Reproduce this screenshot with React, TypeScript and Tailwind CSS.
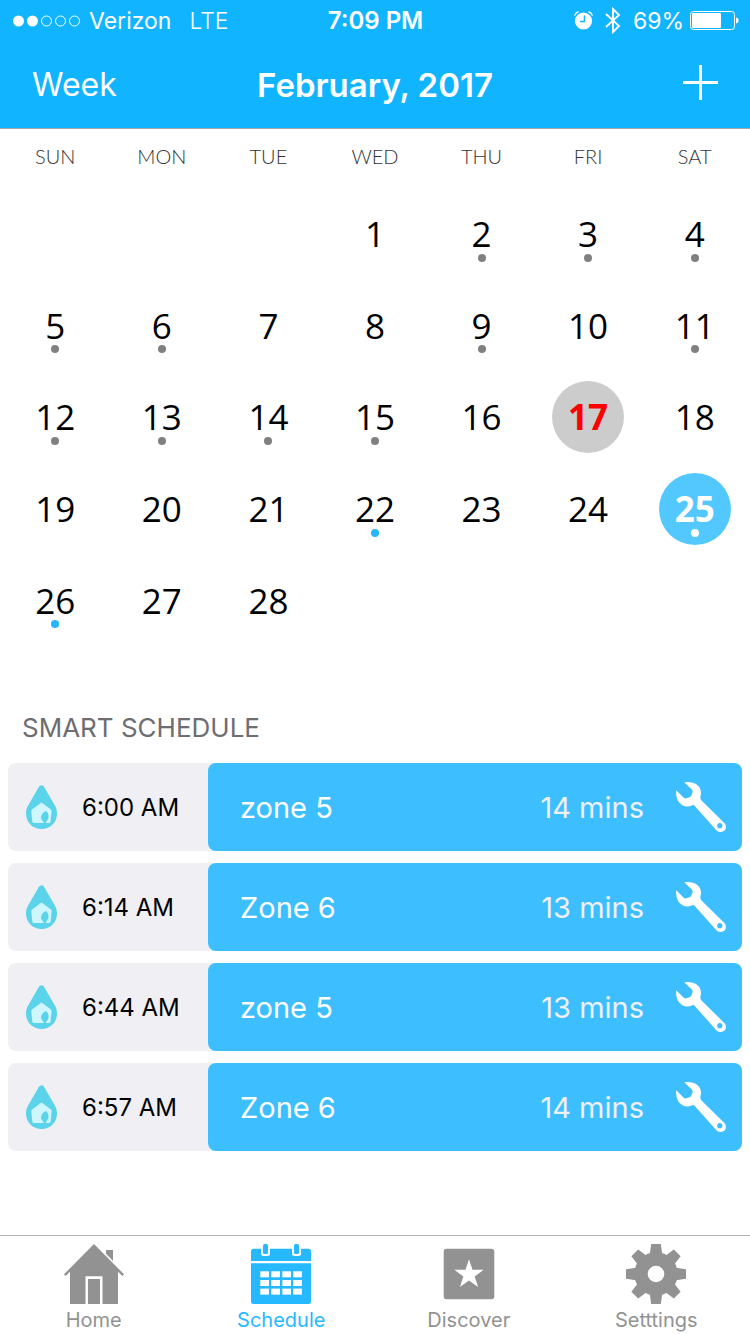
import type { ReactNode } from 'react';

type Dot = 'past' | 'upcoming';

type Zone = { time: string; name: string; duration: string };

const WEEKDAYS = ['SUN', 'MON', 'TUE', 'WED', 'THU', 'FRI', 'SAT'];

const WEEKS: (number | null)[][] = [
  [null, null, null, 1, 2, 3, 4],
  [5, 6, 7, 8, 9, 10, 11],
  [12, 13, 14, 15, 16, 17, 18],
  [19, 20, 21, 22, 23, 24, 25],
  [26, 27, 28, null, null, null, null],
];

const DOTS: Record<number, Dot> = {
  2: 'past',
  3: 'past',
  4: 'past',
  5: 'past',
  6: 'past',
  9: 'past',
  11: 'past',
  12: 'past',
  13: 'past',
  14: 'past',
  15: 'past',
  22: 'upcoming',
  25: 'upcoming',
  26: 'upcoming',
};

const TODAY = 17;
const SELECTED = 25;

const ZONES: Zone[] = [
  { time: '6:00 AM', name: 'zone 5', duration: '14 mins' },
  { time: '6:14 AM', name: 'Zone 6', duration: '13 mins' },
  { time: '6:44 AM', name: 'zone 5', duration: '13 mins' },
  { time: '6:57 AM', name: 'Zone 6', duration: '14 mins' },
];

function StatusBar() {
  return (
    <div className="grid h-[41px] grid-cols-[1fr_auto_1fr] items-center pr-[11px] pl-3 text-[23px] leading-10">
      <div className="flex items-center">
        <svg className="h-3 w-[70px]" viewBox="0 0 70 12" fill="none" stroke="currentColor">
          <circle cx="6.5" cy="6" r="5.5" fill="currentColor" stroke="none" />
          <circle cx="20.5" cy="6" r="5.5" fill="currentColor" stroke="none" />
          <circle cx="34.5" cy="6" r="5" />
          <circle cx="48.5" cy="6" r="5" />
          <circle cx="62.5" cy="6" r="5" />
        </svg>
        <span className="ml-[7px]">Verizon</span>
        <span className="ml-[18px] font-light">LTE</span>
      </div>
      <span className="text-2xl leading-10 font-semibold">7:09 PM</span>
      <div className="flex items-center justify-end">
        <svg className="h-[19px] w-[19px]" viewBox="0 0 19 19" fill="none">
          <circle cx="9.5" cy="10" r="8.6" fill="currentColor" />
          <path d="M10.5 4.5V10.5H6" stroke="#10b4ff" strokeWidth="1.5" />
          <path d="M.6 4.6C1.3 2.6 2.6 1.3 4.6.7M18.4 4.6C17.7 2.6 16.4 1.3 14.4.7" stroke="currentColor" strokeWidth="1.4" />
        </svg>
        <svg className="ml-3 h-[27px] w-4" viewBox="0 0 16 27" fill="none" stroke="currentColor" strokeWidth="1.9">
          <path d="M1 7L14 19L8 25V2L14 8L1 20" />
        </svg>
        <span className="ml-3">69%</span>
        <svg className="ml-1.5 h-[19px] w-[49px]" viewBox="0 0 49 19" fill="none">
          <rect x=".5" y=".5" width="44" height="18" rx="3" stroke="currentColor" />
          <rect x="2" y="2" width="29" height="15" rx="1" fill="currentColor" />
          <path d="M46 6.500c1.800.4 2.600 1.400 2.600 3s-.8 2.600-2.600 3z" fill="currentColor" />
        </svg>
      </div>
    </div>
  );
}

function Header() {
  return (
    <header className="border-b border-[#a3a9ad] bg-[#10b4ff] text-white">
      <StatusBar />
      <div className="grid h-[87px] grid-cols-[1fr_auto_1fr] items-center px-8">
        <button type="button" className="justify-self-start text-[32px] leading-10">
          Week
        </button>
        <h1 className="text-[33px] leading-10 font-semibold">February, 2017</h1>
        <button type="button" aria-label="Add schedule" className="mb-1 justify-self-end">
          <svg className="h-[35px] w-[35px]" viewBox="0 0 35 35" stroke="currentColor" strokeWidth="3">
            <path d="M17.500 0V35M0 17.500H35" />
          </svg>
        </button>
      </div>
    </header>
  );
}

function Day({ day }: { day: number }) {
  const dot = DOTS[day];
  let tone = 'text-black';
  let dotTone = dot === 'past' ? 'bg-[#808080]' : 'bg-[#27b5fb]';
  if (day === TODAY) tone = 'bg-[#cccccc] font-bold text-[#ff0000]';
  if (day === SELECTED) {
    tone = 'bg-[#53c8ff] font-bold text-white';
    dotTone = 'bg-white';
  }

  return (
    <button
      type="button"
      className={`relative mx-auto flex h-[72px] w-[72px] items-center justify-center rounded-full text-[35px] leading-none ${tone}`}
    >
      {day}
      {dot && (
        <span className={`absolute bottom-2 left-1/2 h-2 w-2 -translate-x-1/2 rounded-full ${dotTone}`} />
      )}
    </button>
  );
}

function Calendar() {
  return (
    <div className="px-0.5">
      <table className="h-[517px] w-full table-fixed">
        <thead>
          <tr className="h-[59px] font-[Lato,sans-serif]">
            {WEEKDAYS.map((name) => (
              <th key={name} scope="col" className="p-0 pb-1.5 text-xl font-light text-[#333333]">
                {name}
              </th>
            ))}
          </tr>
        </thead>
        <tbody className="font-['Open_Sans',sans-serif]">
          {WEEKS.map((week, i) => (
            <tr key={i}>
              {week.map((day, j) => (
                <td key={j} className="p-0">
                  {day !== null && <Day day={day} />}
                </td>
              ))}
            </tr>
          ))}
        </tbody>
      </table>
    </div>
  );
}

function DropIcon() {
  return (
    <svg className="h-11 w-[31px]" viewBox="0 0 31 44">
      <path
        d="M15.500 .3C16.700 .3 17.600 1 18.300 2.200L28.300 19.500C30.200 22.800 31 25.400 31 28.500C31 37.300 24.300 44 15.500 44S0 37.300 0 28.500C0 25.400.8 22.800 2.700 19.500L12.700 2.200C13.400 1 14.300.3 15.500.3Z"
        fill="#5ad3eb"
      />
      <path
        d="M15.500 17.500L25 24.500Q25.800 25.200 25.600 26.500L24.600 36.500Q24.400 38 23 38H8Q6.500 38 6.300 36.500L5.300 26.500Q5.200 25.200 6 24.500Z"
        fill="#cdf6ff"
      />
      <path d="M20 26C23 28.500 23.600 33.500 20.500 36.200L19.500 39H17.300L17.500 36.500C13.600 34 14.500 28.500 20 26Z" fill="#5ad3eb" />
    </svg>
  );
}

function WrenchIcon() {
  return (
    <svg className="h-[50px] w-[50px]" viewBox="0 0 50 50" fill="currentColor">
      <path
        fillRule="evenodd"
        d="M8.500 .4C16-1.200 25 2.500 25 10.500C25 12.500 24.300 14 24.300 15.600C24.300 17 25 18 26 19L48.300 41C50.500 43.500 50.500 46.500 48.500 48.500C46.300 50.600 42.500 50.500 40.400 48.300L19 24.200C18 23 17 22.700 15.800 23.500C7.500 27.500-1 20 .2 8.300L7.500 15.500Q8.700 16.700 10.300 16.300L13.500 15.200Q15 14.700 15.500 13.200L16.500 10.300Q17 8.800 15.800 7.600ZM43.800 41.100A2.600 2.600 0 1 0 43.800 46.300A2.600 2.600 0 1 0 43.800 41.100Z"
      />
    </svg>
  );
}

function ZoneRow({ zone }: { zone: Zone }) {
  return (
    <li className="flex h-[88px] rounded-lg bg-[#efeff4]">
      <div className="flex w-[200px] items-center pl-[18px]">
        <DropIcon />
        <span className="ml-[25px] pt-0.5 text-2xl text-black">{zone.time}</span>
      </div>
      <div className="flex flex-1 items-center rounded-lg bg-[#3dbfff] pr-4 pl-8 text-[29px]">
        <span className="flex-1 pt-0.5 text-white">{zone.name}</span>
        <span className="pt-0.5 text-[#efeff4]">{zone.duration}</span>
        <button type="button" aria-label={`Edit ${zone.name} at ${zone.time}`} className="ml-8 text-white">
          <WrenchIcon />
        </button>
      </div>
    </li>
  );
}

function HomeIcon() {
  return (
    <svg className="h-[60px] w-[60px]" viewBox="0 0 60 60" fill="currentColor">
      <path d="M30 0L60 30.300L58.500 32L54 27.800V60H38.500V32.300H21.500V60H6V27.800L1.500 32L0 30.300Z" />
      <path d="M42 6H49V17L42 9.700Z" />
      <path d="M24 35H36V60H24Z" />
    </svg>
  );
}

function ScheduleIcon() {
  return (
    <svg className="h-[60px] w-[60px]" viewBox="0 0 60 60">
      <rect y="4.700" width="60" height="55.300" rx="2.500" fill="currentColor" />
      <path d="M0 17H60V19.200H0Z" fill="white" />
      {[12, 43].map((x) => (
        <g key={x}>
          <path d={`M${x - 2} 4V9.500a2.500 2.500 0 0 0 2.500 2.500h4a2.500 2.500 0 0 0 2.500-2.500V4Z`} fill="white" />
          <rect x={x} y="0" width="5" height="10" rx="1.500" fill="currentColor" />
        </g>
      ))}
      {[27.3, 36, 44.6].map((y) =>
        [9.3, 20.3, 31.3, 42.2].map((x) => (
          <rect key={`${x}-${y}`} x={x} y={y} width="8.700" height="6" fill="white" />
        )),
      )}
    </svg>
  );
}

function DiscoverIcon() {
  return (
    <svg className="h-[60px] w-[60px]" viewBox="0 0 60 60">
      <rect x="4.700" y="4.700" width="50.600" height="50.600" rx="3" fill="currentColor" />
      <path
        d="M30 15.200L33.500 25.800H44.600L35.700 32.500L39.100 43.100L30 36.600L20.900 43.100L24.300 32.500L15.400 25.800H26.500Z"
        fill="white"
      />
    </svg>
  );
}

function SettingsIcon() {
  return (
    <svg className="h-[60px] w-[60px]" viewBox="0 0 60 60">
      <circle cx="30" cy="30" r="15" fill="none" stroke="currentColor" strokeWidth="13.400" />
      {[0, 45, 90, 135, 180, 225, 270, 315].map((angle) => (
        <path key={angle} d="M25.200 0H34.800L36.500 12H23.500Z" fill="currentColor" transform={`rotate(${angle} 30 30)`} />
      ))}
    </svg>
  );
}

const TABS: { label: string; icon: ReactNode; active?: boolean }[] = [
  { label: 'Home', icon: <HomeIcon /> },
  { label: 'Schedule', icon: <ScheduleIcon />, active: true },
  { label: 'Discover', icon: <DiscoverIcon /> },
  { label: 'Setttings', icon: <SettingsIcon /> },
];

function TabBar() {
  return (
    <nav className="grid grid-cols-4 border-t border-[#b2b2b2] pt-2">
      {TABS.map((tab) => (
        <button
          key={tab.label}
          type="button"
          aria-current={tab.active ? 'page' : undefined}
          className={`flex flex-col items-center ${tab.active ? 'text-[#27b9ff]' : 'text-[#929292]'}`}
        >
          {tab.icon}
          <span className="mt-0.5 text-xl leading-7">{tab.label}</span>
        </button>
      ))}
    </nav>
  );
}

export default function App() {
  return (
    <div className="flex min-h-screen flex-col bg-white font-[Inter,'Liberation_Sans',sans-serif]">
      <Header />
      <main className="flex-1">
        <Calendar />
        <h2 className="mt-16 px-[22px] text-[26px] leading-9 text-[#6d6d72]">SMART SCHEDULE</h2>
        <ul className="mt-[17px] space-y-3 px-2">
          {ZONES.map((zone) => (
            <ZoneRow key={zone.time} zone={zone} />
          ))}
        </ul>
      </main>
      <TabBar />
    </div>
  );
}
